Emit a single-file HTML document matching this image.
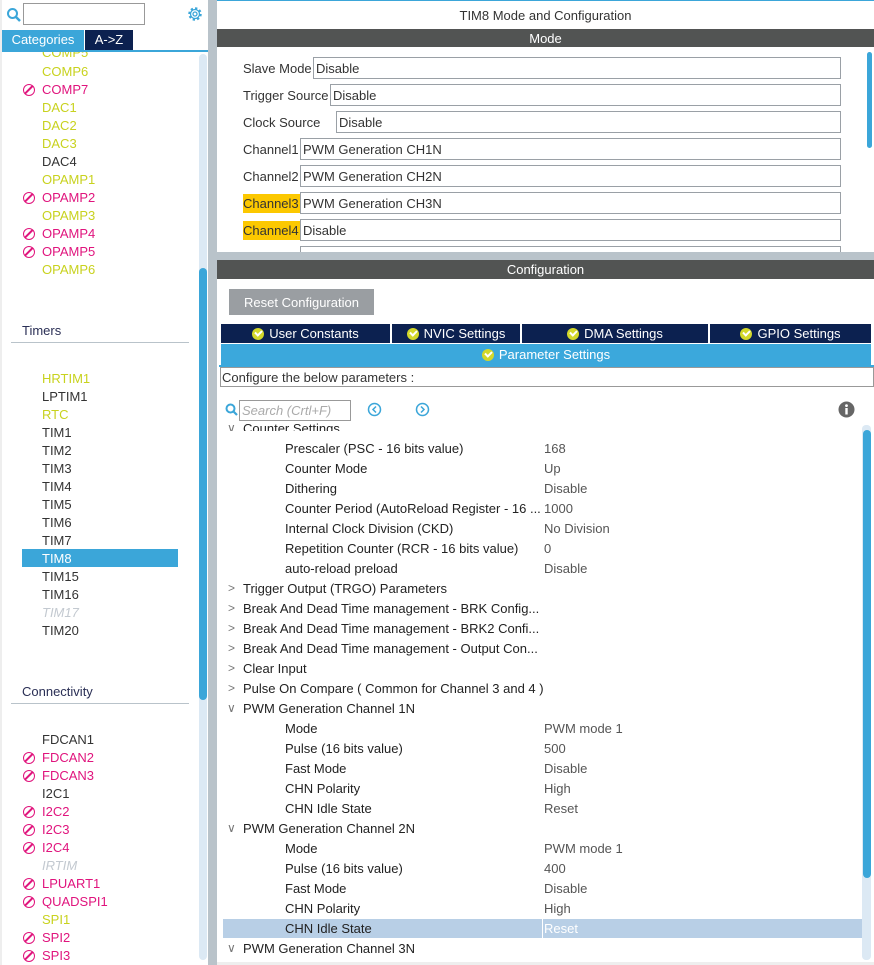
<!DOCTYPE html>
<html><head><meta charset="utf-8"><style>
*{margin:0;padding:0;box-sizing:border-box}
body{width:874px;height:965px;overflow:hidden;background:#b9c3ca;font-family:"Liberation Sans",Arial,sans-serif;font-size:13px;color:#222;position:relative}
.a{position:absolute;white-space:nowrap;line-height:16px;margin-top:1px}
.y{color:#c8d21e}.p{color:#e0147d}.d{color:#333}.g{color:#c3c9d0;font-style:italic}
.no{position:absolute;width:12px;height:12px;border:1.6px solid #e0147d;border-radius:50%;margin-top:1px}
.no:after{content:"";position:absolute;left:4px;top:-1px;width:1.6px;height:11px;background:#e0147d;transform:rotate(45deg)}
.box{position:absolute;border:1px solid #9aa0a6;background:#fff;height:22px;line-height:21px;padding-left:2px;color:#333}
.ck{display:inline-block;width:12px;height:12px;border-radius:50%;background:#d3d82a;vertical-align:-2px;margin-right:5px;position:relative}
.ck:after{content:"";position:absolute;left:3px;top:2px;width:5px;height:3px;border-left:2px solid #fff;border-bottom:2px solid #fff;transform:rotate(-45deg)}
.tab{position:absolute;top:324px;height:19px;background:#0c2150;color:#fff;text-align:center;line-height:19px;font-size:13px}
.v{color:#555}
.ar{position:absolute;color:#777;font-size:12px;margin-top:1px}
</style></head><body>
<div style="position:absolute;left:2px;top:0;width:206px;height:965px;background:#fff"></div>
<div style="position:absolute;left:0;top:0;width:2px;height:965px;background:#eee"></div>
<svg style="position:absolute;left:6px;top:7px" width="16" height="16"><circle cx="6.5" cy="6.5" r="4.5" fill="none" stroke="#3ba6d9" stroke-width="2"/><line x1="10" y1="10" x2="14" y2="14" stroke="#3ba6d9" stroke-width="2.5"/></svg>
<div style="position:absolute;left:23px;top:3px;width:122px;height:22px;border:1px solid #999;background:#fff"></div>
<svg style="position:absolute;left:186px;top:5px" width="18" height="18" viewBox="0 0 18 18"><circle cx="9" cy="9" r="5.5" fill="none" stroke="#3ba6d9" stroke-width="2.5" stroke-dasharray="2.2 2.1"/><circle cx="9" cy="9" r="4.5" fill="none" stroke="#3ba6d9" stroke-width="1.3"/><circle cx="9" cy="9" r="2" fill="none" stroke="#3ba6d9" stroke-width="1.3"/></svg>
<div style="position:absolute;left:2px;top:30px;width:82px;height:20px;background:#3ba6d9;color:#fff;line-height:20px;text-align:center">Categories</div>
<div style="position:absolute;left:85px;top:30px;width:48px;height:20px;background:#0c2150;color:#fff;line-height:20px;text-align:center">A-&gt;Z</div>
<div style="position:absolute;left:2px;top:50px;width:206px;height:2px;background:#3ba6d9"></div>
<div style="position:absolute;left:199px;top:54px;width:8px;height:906px;background:#dce9f4;border-radius:4px"></div>
<div style="position:absolute;left:199px;top:268px;width:8px;height:432px;background:#3ba6d9;border-radius:4px"></div>
<div style="position:absolute;left:2px;top:52px;width:196px;height:10px;overflow:hidden"><div class="a y" style="left:40px;top:-8px">COMP5</div></div>
<div class="a y" style="left:42px;top:63px">COMP6</div>
<div class="no" style="left:23px;top:83px"></div><div class="a p" style="left:42px;top:81px">COMP7</div>
<div class="a y" style="left:42px;top:99px">DAC1</div>
<div class="a y" style="left:42px;top:117px">DAC2</div>
<div class="a y" style="left:42px;top:135px">DAC3</div>
<div class="a d" style="left:42px;top:153px">DAC4</div>
<div class="a y" style="left:42px;top:171px">OPAMP1</div>
<div class="no" style="left:23px;top:191px"></div><div class="a p" style="left:42px;top:189px">OPAMP2</div>
<div class="a y" style="left:42px;top:207px">OPAMP3</div>
<div class="no" style="left:23px;top:227px"></div><div class="a p" style="left:42px;top:225px">OPAMP4</div>
<div class="no" style="left:23px;top:245px"></div><div class="a p" style="left:42px;top:243px">OPAMP5</div>
<div class="a y" style="left:42px;top:261px">OPAMP6</div>
<div class="a" style="left:22px;top:322px;color:#2a2f55">Timers</div>
<div style="position:absolute;left:11px;top:342px;width:178px;height:1px;background:#b9c3ca"></div>
<div class="a y" style="left:42px;top:370px">HRTIM1</div>
<div class="a d" style="left:42px;top:388px">LPTIM1</div>
<div class="a y" style="left:42px;top:406px">RTC</div>
<div class="a d" style="left:42px;top:424px">TIM1</div>
<div class="a d" style="left:42px;top:442px">TIM2</div>
<div class="a d" style="left:42px;top:460px">TIM3</div>
<div class="a d" style="left:42px;top:478px">TIM4</div>
<div class="a d" style="left:42px;top:496px">TIM5</div>
<div class="a d" style="left:42px;top:514px">TIM6</div>
<div class="a d" style="left:42px;top:532px">TIM7</div>
<div style="position:absolute;left:22px;top:549px;width:156px;height:18px;background:#3ba6d9"></div>
<div class="a" style="left:42px;top:550px;color:#fff">TIM8</div>
<div class="a d" style="left:42px;top:568px">TIM15</div>
<div class="a d" style="left:42px;top:586px">TIM16</div>
<div class="a g" style="left:42px;top:604px">TIM17</div>
<div class="a d" style="left:42px;top:622px">TIM20</div>
<div class="a" style="left:22px;top:683px;color:#2a2f55">Connectivity</div>
<div style="position:absolute;left:11px;top:703px;width:178px;height:1px;background:#b9c3ca"></div>
<div class="a d" style="left:42px;top:731px">FDCAN1</div>
<div class="no" style="left:23px;top:751px"></div><div class="a p" style="left:42px;top:749px">FDCAN2</div>
<div class="no" style="left:23px;top:769px"></div><div class="a p" style="left:42px;top:767px">FDCAN3</div>
<div class="a d" style="left:42px;top:785px">I2C1</div>
<div class="no" style="left:23px;top:805px"></div><div class="a p" style="left:42px;top:803px">I2C2</div>
<div class="no" style="left:23px;top:823px"></div><div class="a p" style="left:42px;top:821px">I2C3</div>
<div class="no" style="left:23px;top:841px"></div><div class="a p" style="left:42px;top:839px">I2C4</div>
<div class="a g" style="left:42px;top:857px">IRTIM</div>
<div class="no" style="left:23px;top:877px"></div><div class="a p" style="left:42px;top:875px">LPUART1</div>
<div class="no" style="left:23px;top:895px"></div><div class="a p" style="left:42px;top:893px">QUADSPI1</div>
<div class="a y" style="left:42px;top:911px">SPI1</div>
<div class="no" style="left:23px;top:931px"></div><div class="a p" style="left:42px;top:929px">SPI2</div>
<div class="no" style="left:23px;top:949px"></div><div class="a p" style="left:42px;top:947px">SPI3</div>

<div style="position:absolute;left:217px;top:0;width:657px;height:252px;background:#fff"></div>
<div style="position:absolute;left:217px;top:0;width:657px;height:1px;background:#3ba6d9"></div>
<div class="a" style="left:217px;width:657px;text-align:center;top:7px;color:#333">TIM8 Mode and Configuration</div>
<div style="position:absolute;left:217px;top:29px;width:657px;height:18px;background:#525453;color:#fff;text-align:center;line-height:19px">Mode</div>
<div style="position:absolute;left:867px;top:52px;width:5px;height:96px;background:#3ba6d9;border-radius:3px"></div>
<div class="a" style="left:243px;top:60px;color:#333">Slave Mode</div><div class="box" style="left:313px;top:57px;width:528px">Disable</div>
<div class="a" style="left:243px;top:87px;color:#333">Trigger Source</div><div class="box" style="left:330px;top:84px;width:511px">Disable</div>
<div class="a" style="left:243px;top:114px;color:#333">Clock Source</div><div class="box" style="left:336px;top:111px;width:505px">Disable</div>
<div class="a" style="left:243px;top:141px;color:#333">Channel1</div><div class="box" style="left:300px;top:138px;width:541px">PWM Generation CH1N</div>
<div class="a" style="left:243px;top:168px;color:#333">Channel2</div><div class="box" style="left:300px;top:165px;width:541px">PWM Generation CH2N</div>
<div style="position:absolute;left:243px;top:194px;width:57px;height:19px;background:#fcc800"></div><div class="a" style="left:243px;top:195px;color:#333">Channel3</div><div class="box" style="left:300px;top:192px;width:541px">PWM Generation CH3N</div>
<div style="position:absolute;left:243px;top:221px;width:57px;height:19px;background:#fcc800"></div><div class="a" style="left:243px;top:222px;color:#333">Channel4</div><div class="box" style="left:300px;top:219px;width:541px">Disable</div>
<div style="position:absolute;left:300px;top:246px;width:541px;height:6px;border:1px solid #9aa0a6;border-bottom:none"></div>

<div style="position:absolute;left:217px;top:260px;width:657px;height:705px;background:#fff"></div>
<div style="position:absolute;left:217px;top:260px;width:657px;height:19px;background:#525453;color:#fff;text-align:center;line-height:20px">Configuration</div>
<div style="position:absolute;left:229px;top:289px;width:145px;height:26px;background:#9a9ea2;color:#fff;text-align:center;line-height:27px">Reset Configuration</div>
<div class="tab" style="left:221px;width:169px"><span class="ck"></span>User Constants</div>
<div class="tab" style="left:392px;width:128px"><span class="ck"></span>NVIC Settings</div>
<div class="tab" style="left:522px;width:186px"><span class="ck"></span>DMA Settings</div>
<div class="tab" style="left:710px;width:161px"><span class="ck"></span>GPIO Settings</div>
<div style="position:absolute;left:221px;top:344px;width:650px;height:21px;background:#3ba8dc;color:#fff;text-align:center;line-height:21px"><span class="ck"></span>Parameter Settings</div>
<div style="position:absolute;left:219px;top:365px;width:655px;height:2px;background:#3ba8dc"></div>
<div style="position:absolute;left:220px;top:367px;width:654px;height:20px;border:1px solid #999;line-height:19px;padding-left:1px;color:#333">Configure the below parameters :</div>
<svg style="position:absolute;left:225px;top:403px" width="13" height="14"><circle cx="5.5" cy="5.5" r="4" fill="none" stroke="#3ba6d9" stroke-width="2"/><line x1="8.5" y1="8.5" x2="12" y2="12" stroke="#3ba6d9" stroke-width="2.2"/></svg>
<div style="position:absolute;left:239px;top:400px;width:112px;height:21px;border:1px solid #999;color:#aaa;font-style:italic;line-height:20px;padding-left:2px">Search (Crtl+F)</div>
<svg style="position:absolute;left:367px;top:402px" width="15" height="15"><circle cx="7.5" cy="7.5" r="6" fill="none" stroke="#3ba6d9" stroke-width="1.5"/><path d="M9 4.5L6 7.5L9 10.5" fill="none" stroke="#3ba6d9" stroke-width="1.5"/></svg>
<svg style="position:absolute;left:415px;top:402px" width="15" height="15"><circle cx="7.5" cy="7.5" r="6" fill="none" stroke="#3ba6d9" stroke-width="1.5"/><path d="M6 4.5L9 7.5L6 10.5" fill="none" stroke="#3ba6d9" stroke-width="1.5"/></svg>
<svg style="position:absolute;left:838px;top:401px" width="17" height="17"><circle cx="8.5" cy="8.5" r="8" fill="#666"/><rect x="7.3" y="7" width="2.4" height="6.5" fill="#fff"/><circle cx="8.5" cy="4.6" r="1.4" fill="#fff"/></svg>
<div style="position:absolute;left:862px;top:425px;width:9px;height:535px;background:#dce9f4;border-radius:4px"></div>
<div style="position:absolute;left:863px;top:430px;width:8px;height:448px;background:#3ba6d9;border-radius:4px"></div>
<div style="position:absolute;left:223px;top:919px;width:639px;height:19px;background:#b8cfe6"></div>
<div style="position:absolute;left:542px;top:919px;width:1px;height:19px;background:#fff"></div>
<div style="position:absolute;left:217px;top:421px;width:645px;height:10px;overflow:hidden"><div class="ar" style="left:10px;top:-1px">&#x2228;</div><div class="a" style="left:26px;top:-1px">Counter Settings</div></div>

<div class="a" style="left:285px;top:440px">Prescaler (PSC - 16 bits value)</div><div class="a v" style="left:544px;top:440px">168</div>
<div class="a" style="left:285px;top:460px">Counter Mode</div><div class="a v" style="left:544px;top:460px">Up</div>
<div class="a" style="left:285px;top:480px">Dithering</div><div class="a v" style="left:544px;top:480px">Disable</div>
<div class="a" style="left:285px;top:500px">Counter Period (AutoReload Register - 16 ...</div><div class="a v" style="left:544px;top:500px">1000</div>
<div class="a" style="left:285px;top:520px">Internal Clock Division (CKD)</div><div class="a v" style="left:544px;top:520px">No Division</div>
<div class="a" style="left:285px;top:540px">Repetition Counter (RCR - 16 bits value)</div><div class="a v" style="left:544px;top:540px">0</div>
<div class="a" style="left:285px;top:560px">auto-reload preload</div><div class="a v" style="left:544px;top:560px">Disable</div>
<div class="ar" style="left:228px;top:580px">&gt;</div><div class="a" style="left:243px;top:580px">Trigger Output (TRGO) Parameters</div>
<div class="ar" style="left:228px;top:600px">&gt;</div><div class="a" style="left:243px;top:600px">Break And Dead Time management - BRK Config...</div>
<div class="ar" style="left:228px;top:620px">&gt;</div><div class="a" style="left:243px;top:620px">Break And Dead Time management - BRK2 Confi...</div>
<div class="ar" style="left:228px;top:640px">&gt;</div><div class="a" style="left:243px;top:640px">Break And Dead Time management - Output Con...</div>
<div class="ar" style="left:228px;top:660px">&gt;</div><div class="a" style="left:243px;top:660px">Clear Input</div>
<div class="ar" style="left:228px;top:680px">&gt;</div><div class="a" style="left:243px;top:680px">Pulse On Compare ( Common for Channel 3 and 4 )</div>
<div class="ar" style="left:227px;top:700px">&#x2228;</div><div class="a" style="left:243px;top:700px">PWM Generation Channel 1N</div>
<div class="a" style="left:285px;top:720px">Mode</div><div class="a v" style="left:544px;top:720px">PWM mode 1</div>
<div class="a" style="left:285px;top:740px">Pulse (16 bits value)</div><div class="a v" style="left:544px;top:740px">500</div>
<div class="a" style="left:285px;top:760px">Fast Mode</div><div class="a v" style="left:544px;top:760px">Disable</div>
<div class="a" style="left:285px;top:780px">CHN Polarity</div><div class="a v" style="left:544px;top:780px">High</div>
<div class="a" style="left:285px;top:800px">CHN Idle State</div><div class="a v" style="left:544px;top:800px">Reset</div>
<div class="ar" style="left:227px;top:820px">&#x2228;</div><div class="a" style="left:243px;top:820px">PWM Generation Channel 2N</div>
<div class="a" style="left:285px;top:840px">Mode</div><div class="a v" style="left:544px;top:840px">PWM mode 1</div>
<div class="a" style="left:285px;top:860px">Pulse (16 bits value)</div><div class="a v" style="left:544px;top:860px">400</div>
<div class="a" style="left:285px;top:880px">Fast Mode</div><div class="a v" style="left:544px;top:880px">Disable</div>
<div class="a" style="left:285px;top:900px">CHN Polarity</div><div class="a v" style="left:544px;top:900px">High</div>
<div class="a" style="left:285px;top:920px">CHN Idle State</div><div class="a" style="left:544px;top:920px;color:#fff">Reset</div>
<div class="ar" style="left:227px;top:940px">&#x2228;</div><div class="a" style="left:243px;top:940px">PWM Generation Channel 3N</div>
<div style="position:absolute;left:217px;top:962px;width:657px;height:3px;background:#eee"></div>
</body></html>
